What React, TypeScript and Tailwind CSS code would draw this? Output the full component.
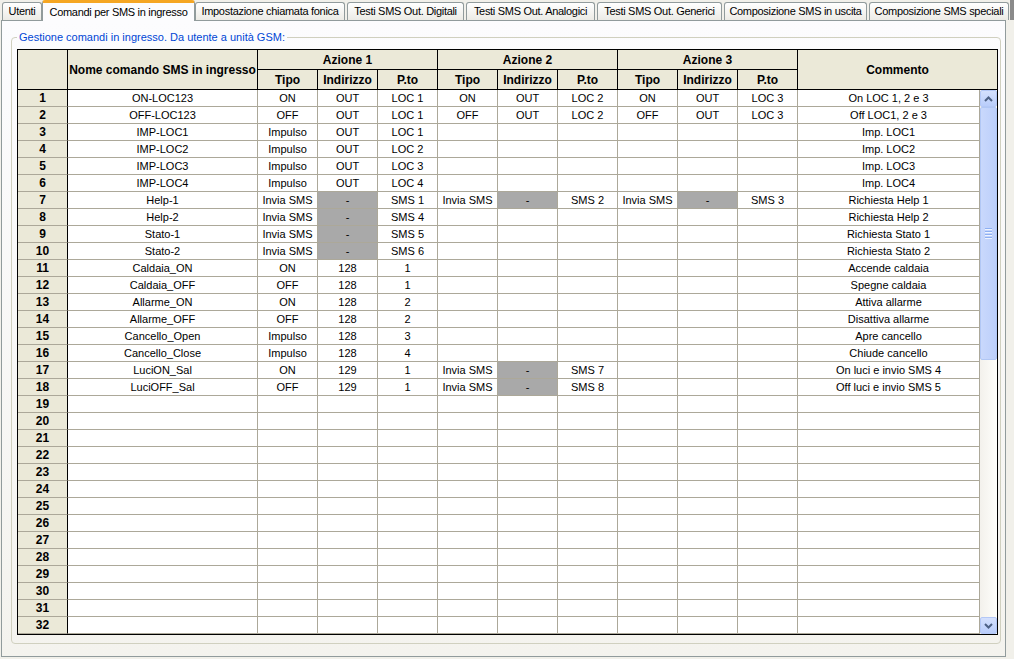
import React from "react";

type Act = [string, string, string] | null;
type Row = [string, Act, Act, Act, string];

const rows: Row[] = [
  ["ON-LOC123", ["ON", "OUT", "LOC 1"], ["ON", "OUT", "LOC 2"], ["ON", "OUT", "LOC 3"], "On LOC 1, 2 e 3"],
  ["OFF-LOC123", ["OFF", "OUT", "LOC 1"], ["OFF", "OUT", "LOC 2"], ["OFF", "OUT", "LOC 3"], "Off LOC1, 2 e 3"],
  ["IMP-LOC1", ["Impulso", "OUT", "LOC 1"], null, null, "Imp. LOC1"],
  ["IMP-LOC2", ["Impulso", "OUT", "LOC 2"], null, null, "Imp. LOC2"],
  ["IMP-LOC3", ["Impulso", "OUT", "LOC 3"], null, null, "Imp. LOC3"],
  ["IMP-LOC4", ["Impulso", "OUT", "LOC 4"], null, null, "Imp. LOC4"],
  ["Help-1", ["Invia SMS", "-", "SMS 1"], ["Invia SMS", "-", "SMS 2"], ["Invia SMS", "-", "SMS 3"], "Richiesta Help 1"],
  ["Help-2", ["Invia SMS", "-", "SMS 4"], null, null, "Richiesta Help 2"],
  ["Stato-1", ["Invia SMS", "-", "SMS 5"], null, null, "Richiesta Stato 1"],
  ["Stato-2", ["Invia SMS", "-", "SMS 6"], null, null, "Richiesta Stato 2"],
  ["Caldaia_ON", ["ON", "128", "1"], null, null, "Accende caldaia"],
  ["Caldaia_OFF", ["OFF", "128", "1"], null, null, "Spegne caldaia"],
  ["Allarme_ON", ["ON", "128", "2"], null, null, "Attiva allarme"],
  ["Allarme_OFF", ["OFF", "128", "2"], null, null, "Disattiva allarme"],
  ["Cancello_Open", ["Impulso", "128", "3"], null, null, "Apre cancello"],
  ["Cancello_Close", ["Impulso", "128", "4"], null, null, "Chiude cancello"],
  ["LuciON_Sal", ["ON", "129", "1"], ["Invia SMS", "-", "SMS 7"], null, "On luci e invio SMS 4"],
  ["LuciOFF_Sal", ["OFF", "129", "1"], ["Invia SMS", "-", "SMS 8"], null, "Off luci e invio SMS 5"],
];
while (rows.length < 32) rows.push(["", null, null, null, ""]);

const tabs = [
  { label: "Utenti", cls: "ml-[2px] w-[40px]" },
  { label: "Comandi per SMS in ingresso", cls: "w-[153px]", active: true },
  { label: "Impostazione chiamata fonica", cls: "w-[150px]" },
  { label: "Testi SMS Out. Digitali", cls: "ml-[2px] w-[117px]" },
  { label: "Testi SMS Out. Analogici", cls: "ml-[2px] w-[129px]" },
  { label: "Testi SMS Out. Generici", cls: "ml-[2px] w-[125px]" },
  { label: "Composizione SMS in uscita", cls: "ml-[2px] w-[143px]" },
  { label: "Composizione SMS speciali", cls: "ml-[2px] w-[140px]" },
];

const hdr = "flex items-center justify-center border-r border-b border-black bg-[#ebe9d8] text-[12px] font-bold";
const cell = "h-[17px] flex items-center justify-center border-r border-b border-[#aca899] text-[11px] leading-none whitespace-nowrap";

function Chevron({ up }: { up?: boolean }) {
  return (
    <svg width="9" height="6" viewBox="0 0 9 6">
      <path d={up ? "M1 5 L4.5 1.5 L8 5" : "M1 1 L4.5 4.5 L8 1"} fill="none" stroke="#4d6185" strokeWidth="2" />
    </svg>
  );
}

function ScrollBtn({ up }: { up?: boolean }) {
  return (
    <div className="h-[17px] flex items-center justify-center rounded-[2px] border border-[#b4c8f6] bg-gradient-to-b from-[#d4e0fd] to-[#b9cdfb]">
      <Chevron up={up} />
    </div>
  );
}

export default function App() {
  return (
    <div className="w-[1014px] h-[659px] bg-[#f1f0ea] flex flex-col font-['Liberation_Sans',Arial,sans-serif] text-black">
      {/* tab strip */}
      <div className="h-[20px] flex items-end">
        {tabs.map((t) =>
          t.active ? (
            <div
              key={t.label}
              className={`${t.cls} relative z-10 -mb-px h-[21px] flex items-center justify-center border-x border-t-[3px] border-x-[#919b9c] border-t-[#f5a623] rounded-t-[3px] bg-[#fcfcfe] text-[11px] tracking-[-0.3px]`}
            >
              {t.label}
            </div>
          ) : (
            <div
              key={t.label}
              className={`${t.cls} h-[18px] flex items-center justify-center border-x border-t border-[#919b9c] rounded-t-[3px] bg-gradient-to-b from-white to-[#ecebe5] text-[11px] tracking-[-0.3px]`}
            >
              {t.label}
            </div>
          )
        )}
        <div className="flex-1 ml-px h-[20px] bg-[#8a8a8a]" />
      </div>

      {/* tab page */}
      <div className="ml-px w-[1005px] h-[637px] border border-[#919b9c] bg-gradient-to-b from-[#fcfcfe] to-[#f4f3ee] pt-[10px] pl-[9px] pr-[4px]">
        <fieldset className="border border-[#d0d0bf] rounded-[4px] pl-[5px] pr-[2px] pt-[5px] pb-[8px]">
          <legend className="px-[2px] text-[11px] leading-[13px] text-[#0046d5]">
            Gestione comandi in ingresso. Da utente a unità GSM:
          </legend>

          <div className="w-[981px] border border-black bg-white">
            {/* header */}
            <div className="grid grid-cols-[50px_190px_repeat(9,60px)_199px] grid-rows-[20px_20px]">
              <div className={`${hdr} row-span-2`} />
              <div className={`${hdr} row-span-2`}>Nome comando SMS in ingresso</div>
              <div className={`${hdr} col-span-3`}>Azione 1</div>
              <div className={`${hdr} col-span-3`}>Azione 2</div>
              <div className={`${hdr} col-span-3`}>Azione 3</div>
              <div className={`${hdr} row-span-2 border-r-0`}>Commento</div>
              {[1, 2, 3].map((n) => (
                <React.Fragment key={n}>
                  <div className={hdr}>Tipo</div>
                  <div className={hdr}>Indirizzo</div>
                  <div className={hdr}>P.to</div>
                </React.Fragment>
              ))}
            </div>

            {/* body */}
            <div className="flex">
              <div className="grid grid-cols-[50px_190px_repeat(9,60px)_182px]">
                {rows.map((r, i) => (
                  <React.Fragment key={i}>
                    <div className="h-[17px] flex items-center justify-center border-r border-r-black border-b border-b-[#aca899] bg-[#ebe9d8] text-[12px] font-bold">
                      {i + 1}
                    </div>
                    <div className={cell}>{r[0]}</div>
                    {[r[1], r[2], r[3]].map((a, k) => (
                      <React.Fragment key={k}>
                        <div className={cell}>{a ? a[0] : ""}</div>
                        <div className={`${cell} ${a && a[1] === "-" ? "bg-[#a9a9a9]" : ""}`}>{a ? a[1] : ""}</div>
                        <div className={cell}>{a ? a[2] : ""}</div>
                      </React.Fragment>
                    ))}
                    <div className={cell}>{r[4]}</div>
                  </React.Fragment>
                ))}
              </div>

              {/* scrollbar */}
              <div className="w-[17px] flex flex-col bg-gradient-to-r from-[#f3f1ec] to-[#fefefb]">
                <ScrollBtn up />
                <div className="flex-1 flex flex-col">
                  <div className="h-[253px] rounded-[2px] border border-[#b1c7f5] bg-gradient-to-r from-[#c9d8fc] to-[#bccffb] flex flex-col items-center justify-center gap-[1px]">
                    {[0, 1, 2, 3].map((g) => (
                      <div key={g} className="w-[7px] h-[2px] border-t border-t-[#8eb0f3] border-b border-b-[#eef3fe]" />
                    ))}
                  </div>
                </div>
                <ScrollBtn />
              </div>
            </div>
          </div>
        </fieldset>
      </div>
    </div>
  );
}
